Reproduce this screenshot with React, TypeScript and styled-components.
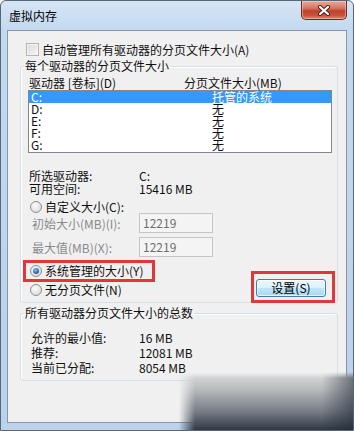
import styled, { createGlobalStyle } from 'styled-components';

const GlobalStyle = createGlobalStyle`
  html, body { margin: 0; padding: 0; background: #fff; }
  body {
    width: 354px;
    height: 431px;
    overflow: hidden;
    font-family: "Noto Sans CJK SC", "Liberation Sans", sans-serif;
    font-size: 12px;
    color: #111;
  }
  * { box-sizing: border-box; }
`;

const Window = styled.div`
  position: relative;
  width: 354px;
  height: 431px;
  display: flex;
  flex-direction: column;
  border: 1px solid #56677c;
  border-radius: 6px 6px 0 0;
  background: linear-gradient(180deg, #d6e5f5 0, #c4d8ee 30px, #bcd1ea 100%);
  overflow: hidden;
`;

const TitleBar = styled.div`
  height: 29px;
  display: flex;
  align-items: flex-start;
  justify-content: space-between;
  flex-shrink: 0;
`;

const Title = styled.span`
  margin: 8px 0 0 8px;
  line-height: 14px;
  color: #000;
`;

const CloseButton = styled.div`
  width: 46px;
  height: 19px;
  margin-right: 6px;
  display: grid;
  place-items: center;
  border: 1px solid #6a2b24;
  border-top: none;
  border-radius: 0 0 5px 5px;
  background: linear-gradient(180deg, #e9a99b 0%, #d47563 40%, #c0412c 55%, #c9533c 80%, #dd8a6f 100%);
  box-shadow: inset 0 0 0 1px rgba(255, 220, 210, 0.45);
`;

const Client = styled.div`
  flex: 1;
  margin: 0 6px 7px 6px;
  border: 1px solid #8397b0;
  background: #f0f0f0;
  padding: 12px 8px 0 12px;
  display: flex;
  flex-direction: column;
`;

const CheckRow = styled.label`
  display: flex;
  align-items: center;
  gap: 3px;
  height: 13px;
  margin-left: 6px;
  line-height: 13px;
`;

const CheckBox = styled.span`
  width: 13px;
  height: 13px;
  border: 1px solid #b5b5b5;
  background: linear-gradient(135deg, #d9d9d9, #f7f7f7);
  box-shadow: inset 0 0 0 1px #f4f4f4;
`;

const Group = styled.fieldset`
  margin: 4px 0 0;
  padding: 0;
  min-width: 0;
  border: 1px solid #d5dfe5;
  border-radius: 3px;
  box-shadow: inset 1px 1px 0 #fff;
`;

const Legend = styled.legend`
  margin-left: 3px;
  padding: 0 1px;
  line-height: 12px;
  font-size: 12px;
`;

const HeaderRow = styled.div`
  display: grid;
  grid-template-columns: 155px 1fr;
  height: 12px;
  line-height: 12px;
  margin: 5px 0 0 8px;
`;

const List = styled.div`
  margin: 1px 5px 0 7px;
  border: 1px solid #828790;
  background: #fff;
  padding: 0 0 1px;
  height: 63px;
`;

const ListRow = styled.div<{ $selected?: boolean }>`
  display: grid;
  grid-template-columns: 181px 1fr;
  padding-left: 2px;
  height: 12px;
  line-height: 12px;
  background: ${({ $selected }) => ($selected ? '#3399ff' : 'transparent')};
  color: ${({ $selected }) => ($selected ? '#fff' : '#111')};
`;

const InfoTable = styled.div`
  margin: 16px 0 0 8px;
`;

const InfoRow = styled.div<{ $label: number; $height: number }>`
  display: grid;
  grid-template-columns: ${({ $label }) => $label}px 1fr;
  height: ${({ $height }) => $height}px;
  line-height: ${({ $height }) => $height}px;
`;

const RadioRow = styled.div<{ $indent: number; $top: number }>`
  display: flex;
  align-items: center;
  gap: 3px;
  height: 12px;
  line-height: 12px;
  margin: ${({ $top }) => $top}px 0 0 ${({ $indent }) => $indent}px;
  white-space: nowrap;
`;

const Radio = styled.span<{ $checked?: boolean }>`
  width: 12px;
  height: 12px;
  flex-shrink: 0;
  border-radius: 50%;
  border: 1px solid #8e8f8f;
  background: radial-gradient(circle at 40% 35%, #fbfbfb 0%, #e4e4e4 60%, #cfcfcf 100%);
  display: grid;
  place-items: center;
  &::after {
    content: '';
    width: 6px;
    height: 6px;
    border-radius: 50%;
    display: ${({ $checked }) => ($checked ? 'block' : 'none')};
    background: radial-gradient(circle at 40% 35%, #8cc6f0 0%, #2a6fb8 55%, #123f78 100%);
  }
`;

const FieldRow = styled.div<{ $top: number }>`
  display: grid;
  grid-template-columns: 107px 74px;
  align-items: center;
  height: 20px;
  margin: ${({ $top }) => $top}px 0 0 11px;
  color: #8a8a8a;
`;

const Field = styled.div`
  height: 20px;
  border: 1px solid #c3c6c9;
  background: #f4f4f4;
  padding-left: 3px;
  line-height: 18px;
  color: #6d6d6d;
`;

const BottomArea = styled.div`
  display: flex;
  justify-content: space-between;
  align-items: flex-start;
  height: 42px;
  margin: 3px 2px 0 2px;
`;

const Column = styled.div`
  display: flex;
  flex-direction: column;
`;

const Mark = styled.div<{ $pad: string; $top: number }>`
  padding: ${({ $pad }) => $pad};
  margin-top: ${({ $top }) => $top}px;
  outline: 3px solid #e2363a;
  outline-offset: -3px;
`;

const Button = styled.button`
  width: 70px;
  height: 18px;
  padding: 0;
  border: 1px solid #3c7fb1;
  border-radius: 3px;
  background: linear-gradient(180deg, #ecf7fd 0%, #dcf1fc 48%, #c1e5f8 52%, #a9d8f2 100%);
  box-shadow: inset 0 0 0 1px rgba(255, 255, 255, 0.7);
  font-family: inherit;
  font-size: 12px;
  line-height: 16px;
  color: #000;
`;

const SummaryTable = styled.div`
  margin: 11px 0 5px 10px;
`;

const Watermark = styled.div`
  position: absolute;
  left: 178px;
  top: 371px;
  right: 0;
  bottom: 0;
  background:
    linear-gradient(90deg, rgba(30, 40, 52, 0) 82%, rgba(30, 40, 52, 0.55) 100%),
    linear-gradient(180deg, #dedede 0%, #b8babd 30%, #767d85 68%, #2f3945 100%);
  -webkit-mask-image: linear-gradient(90deg, transparent 0, #000 16px), linear-gradient(180deg, transparent 0, #000 6px);
  -webkit-mask-composite: source-in;
  mask-image: linear-gradient(90deg, transparent 0, #000 16px), linear-gradient(180deg, transparent 0, #000 6px);
  mask-composite: intersect;
`;

const drives = [
  { name: 'C:', size: '托管的系统', selected: true },
  { name: 'D:', size: '无' },
  { name: 'E:', size: '无' },
  { name: 'F:', size: '无' },
  { name: 'G:', size: '无' },
];

export default function App() {
  return (
    <>
      <GlobalStyle />
      <Window>
        <TitleBar>
          <Title>虚拟内存</Title>
          <CloseButton>
            <svg width="14" height="11" viewBox="0 0 14 11">
              <path d="M3 2 L11 9 M11 2 L3 9" stroke="#4a1d18" strokeWidth="4" strokeLinecap="round" />
              <path d="M3 2 L11 9 M11 2 L3 9" stroke="#fff" strokeWidth="2.2" strokeLinecap="round" />
            </svg>
          </CloseButton>
        </TitleBar>

        <Client>
          <CheckRow>
            <CheckBox />
            <span>自动管理所有驱动器的分页文件大小(A)</span>
          </CheckRow>

          <Group>
            <Legend>每个驱动器的分页文件大小</Legend>
            <HeaderRow>
              <span>驱动器 [卷标](D)</span>
              <span>分页文件大小(MB)</span>
            </HeaderRow>
            <List>
              {drives.map((d) => (
                <ListRow key={d.name} $selected={d.selected}>
                  <span>{d.name}</span>
                  <span>{d.size}</span>
                </ListRow>
              ))}
            </List>

            <InfoTable>
              <InfoRow $label={110} $height={13}><span>所选驱动器:</span><span>C:</span></InfoRow>
              <InfoRow $label={110} $height={13}><span>可用空间:</span><span>15416 MB</span></InfoRow>
            </InfoTable>

            <RadioRow $indent={9} $top={6}>
              <Radio />
              <span>自定义大小(C):</span>
            </RadioRow>
            <FieldRow $top={0}>
              <span>初始大小(MB)(I):</span>
              <Field>12219</Field>
            </FieldRow>
            <FieldRow $top={4}>
              <span>最大值(MB)(X):</span>
              <Field>12219</Field>
            </FieldRow>

            <BottomArea>
              <Column>
                <Mark $pad="5px 11px 5px 7px" $top={0}>
                  <RadioRow $indent={0} $top={0}>
                    <Radio $checked />
                    <span>系统管理的大小(Y)</span>
                  </RadioRow>
                </Mark>
                <RadioRow $indent={7} $top={2}>
                  <Radio />
                  <span>无分页文件(N)</span>
                </RadioRow>
              </Column>
              <Mark $pad="8px 9px 6px 5px" $top={11}>
                <Button>设置(S)</Button>
              </Mark>
            </BottomArea>
          </Group>

          <Group>
            <Legend>所有驱动器分页文件大小的总数</Legend>
            <SummaryTable>
              <InfoRow $label={108} $height={15}><span>允许的最小值:</span><span>16 MB</span></InfoRow>
              <InfoRow $label={108} $height={15}><span>推荐:</span><span>12081 MB</span></InfoRow>
              <InfoRow $label={108} $height={15}><span>当前已分配:</span><span>8054 MB</span></InfoRow>
            </SummaryTable>
          </Group>
        </Client>
        <Watermark />
      </Window>
    </>
  );
}
